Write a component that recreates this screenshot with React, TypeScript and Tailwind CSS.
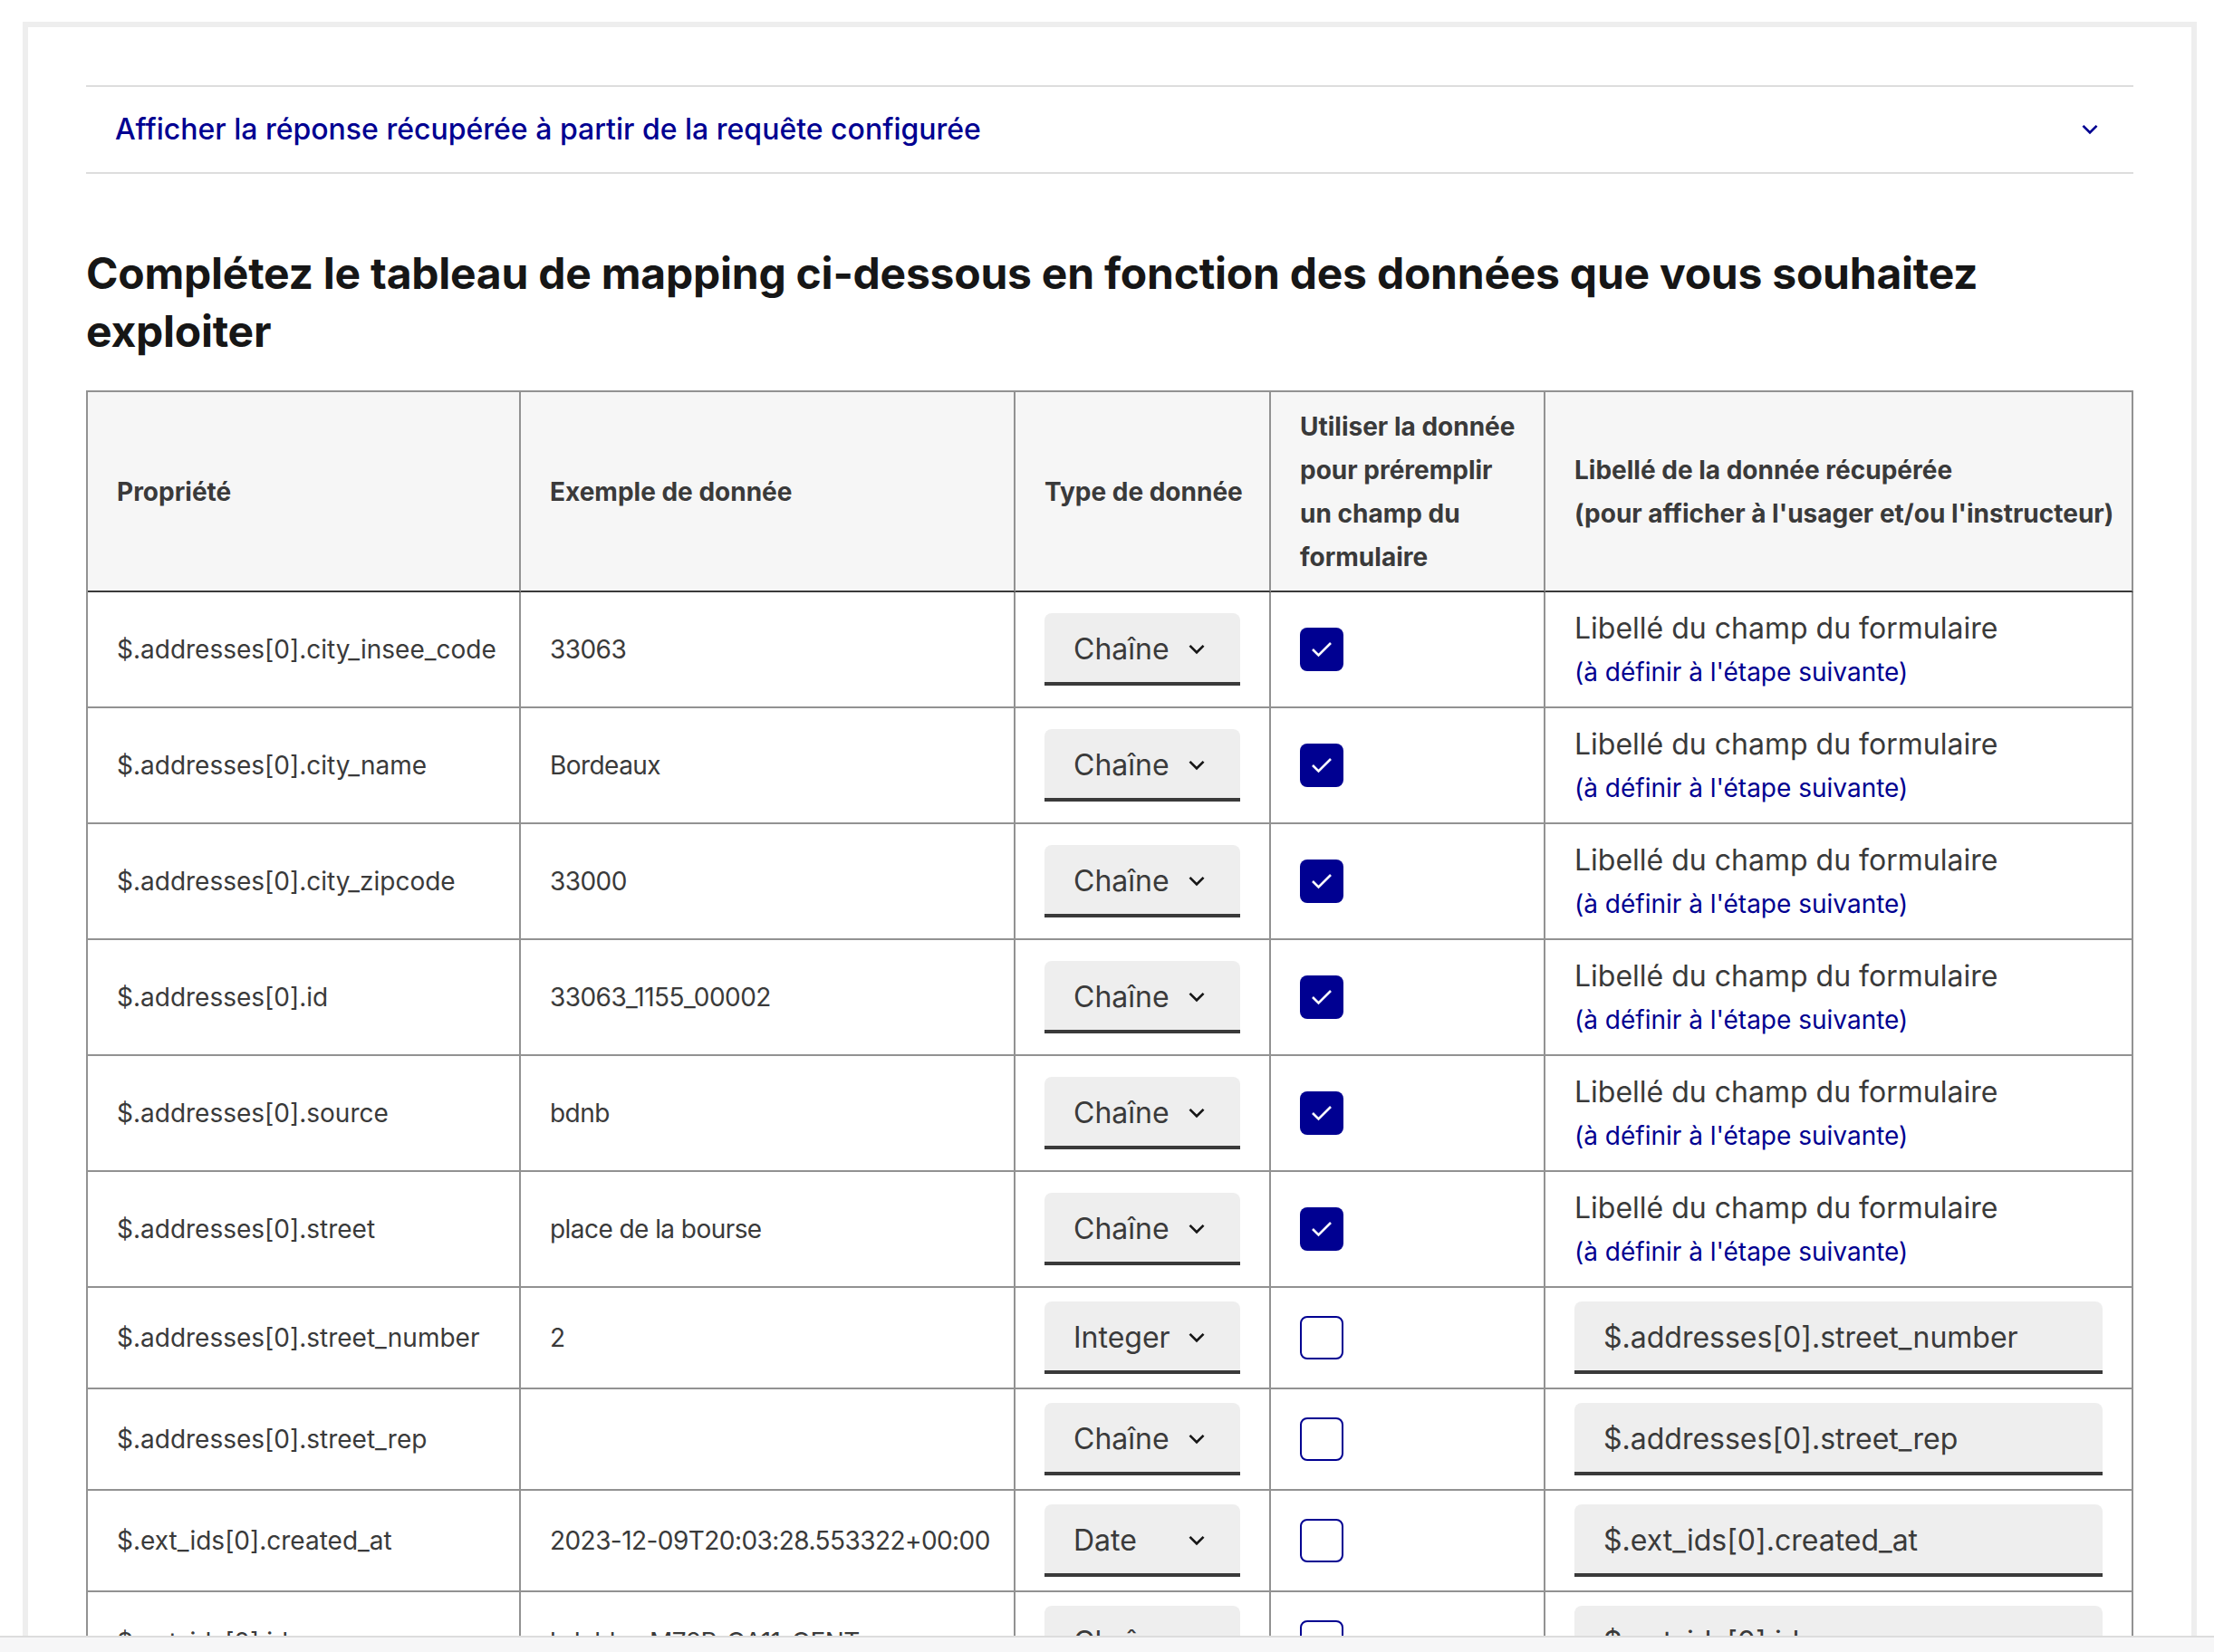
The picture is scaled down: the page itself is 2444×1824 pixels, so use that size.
import { Fragment } from 'react'

type Row = {
    path: string
    sample: string
    type: string
    checked: boolean
}

const rows: Row[] = [
    { path: '$.addresses[0].city_insee_code', sample: '33063', type: 'Chaîne', checked: true },
    { path: '$.addresses[0].city_name', sample: 'Bordeaux', type: 'Chaîne', checked: true },
    { path: '$.addresses[0].city_zipcode', sample: '33000', type: 'Chaîne', checked: true },
    { path: '$.addresses[0].id', sample: '33063_1155_00002', type: 'Chaîne', checked: true },
    { path: '$.addresses[0].source', sample: 'bdnb', type: 'Chaîne', checked: true },
    { path: '$.addresses[0].street', sample: 'place de la bourse', type: 'Chaîne', checked: true },
    { path: '$.addresses[0].street_number', sample: '2', type: 'Integer', checked: false },
    { path: '$.addresses[0].street_rep', sample: '', type: 'Chaîne', checked: false },
    { path: '$.ext_ids[0].created_at', sample: '2023-12-09T20:03:28.553322+00:00', type: 'Date', checked: false },
    { path: '$.ext_ids[0].id', sample: 'bdnbbc-M72P-OA11-QENT', type: 'Chaîne', checked: false },
    { path: '$.ext_ids[0].source', sample: 'rnb', type: 'Chaîne', checked: false },
]

const font = "font-['Inter','Noto_Sans',sans-serif]"

function ChevronDown({ className }: { className?: string }) {
    return (
        <svg viewBox="0 0 24 24" className={className} fill="currentColor">
            <path d="M12 13.172l4.95-4.95 1.414 1.414L12 16 5.636 9.636 7.05 8.222z" />
        </svg>
    )
}

function Checkbox({ checked }: { checked: boolean }) {
    if (!checked) {
        return <div className="w-[48px] h-[48px] rounded-[8px] border-2 border-[#000091] bg-white" />
    }
    return (
        <div className="w-[48px] h-[48px] rounded-[8px] bg-[#000091] flex items-center justify-center">
            <svg viewBox="0 0 48 48" className="w-[48px] h-[48px]">
                <polyline points="14,24 20.5,30.5 34,17" fill="none" stroke="white" strokeWidth="2.6" />
            </svg>
        </div>
    )
}

function Select({ value }: { value: string }) {
    return (
        <div className="w-[219px] h-[80px] rounded-t-[8px] bg-[#eeeeee] shadow-[inset_0_-4px_0_0_#3a3a3a] flex items-center justify-between pl-[32px] pr-[32px]">
            <span className="text-[32px] leading-[48px] text-[#3a3a3a]">{value}</span>
            <ChevronDown className="w-[32px] h-[32px] text-[#161616]" />
        </div>
    )
}

export default function App() {
    const headCell = 'bg-[#f6f6f6] border-r-2 border-b-2 border-r-[#929292] border-b-[#3a3a3a] px-[32px] flex items-center whitespace-nowrap text-[28px] leading-[48px] font-bold text-[#3a3a3a]'
    const bodyCell = 'border-r-2 border-b-2 border-[#929292] px-[32px] flex items-center whitespace-nowrap text-[28px] leading-[48px] text-[#3a3a3a]'

    return (
        <div className={`h-[1824px] flex flex-col overflow-hidden bg-white ${font}`}>
            <div className="flex-1 overflow-hidden pt-[24px] pl-[25px]">
                <div className="w-[2400px] min-h-[1900px] border-[6px] border-b-0 border-[#eeeeee] px-[64px] pt-[64px]">
                    {/* accordion */}
                    <div className="border-t-2 border-b-2 border-[#dddddd]">
                        <div className="h-[94px] pl-[32px] pr-[32px] flex items-center justify-between">
                            <span className="text-[32px] leading-[48px] font-medium text-[#000091]">
                                Afficher la réponse récupérée à partir de la requête configurée
                            </span>
                            <ChevronDown className="w-[32px] h-[32px] text-[#000091]" />
                        </div>
                    </div>

                    <h4 className="mt-[78px] mb-[33px] text-[48px] leading-[64px] font-bold tracking-[-0.005em] text-[#161616]">
                        Complétez le tableau de mapping ci-dessous en fonction des données que vous souhaitez
                        <br />
                        exploiter
                    </h4>

                    <div className="grid grid-cols-[478px_546px_282px_303px_649px] border-l-2 border-t-2 border-[#929292]">
                        <div className={`${headCell} h-[221px]`}>Propriété</div>
                        <div className={`${headCell} h-[221px]`}>Exemple de donnée</div>
                        <div className={`${headCell} h-[221px]`}>Type de donnée</div>
                        <div className={`${headCell} h-[221px]`}>
                            <span>
                                Utiliser la donnée
                                <br />
                                pour préremplir
                                <br />
                                un champ du
                                <br />
                                formulaire
                            </span>
                        </div>
                        <div className={`${headCell} h-[221px]`}>
                            <span>
                                Libellé de la donnée récupérée
                                <br />
                                (pour afficher à l'usager et/ou l'instructeur)
                            </span>
                        </div>

                        {rows.map(row => {
                            const h = row.checked ? 'h-[128px]' : 'h-[112px]'
                            return (
                                <Fragment key={row.path}>
                                    <div className={`${bodyCell} ${h}`}>{row.path}</div>
                                    <div className={`${bodyCell} ${h} tracking-[-0.02em]`}>{row.sample}</div>
                                    <div className={`${bodyCell} ${h}`}>
                                        <Select value={row.type} />
                                    </div>
                                    <div className={`${bodyCell} ${h}`}>
                                        <Checkbox checked={row.checked} />
                                    </div>
                                    <div className={`${bodyCell} ${h}`}>
                                        {row.checked ? (
                                            <div className="flex flex-col">
                                                <span className="text-[32px] leading-[48px] text-[#3a3a3a]">
                                                    Libellé du champ du formulaire
                                                </span>
                                                <span className="mt-[2px] text-[28px] leading-[44px] text-[#000091]">
                                                    (à définir à l'étape suivante)
                                                </span>
                                            </div>
                                        ) : (
                                            <div className="w-full h-[80px] rounded-t-[8px] bg-[#eeeeee] shadow-[inset_0_-4px_0_0_#3a3a3a] flex items-center px-[32px] text-[32px] leading-[48px] text-[#3a3a3a]">
                                                {row.path}
                                            </div>
                                        )}
                                    </div>
                                </Fragment>
                            )
                        })}
                    </div>
                </div>
            </div>
            <div className="h-[18px] border-t-2 border-[#dddddd] bg-[#f6f6f7]" />
        </div>
    )
}
